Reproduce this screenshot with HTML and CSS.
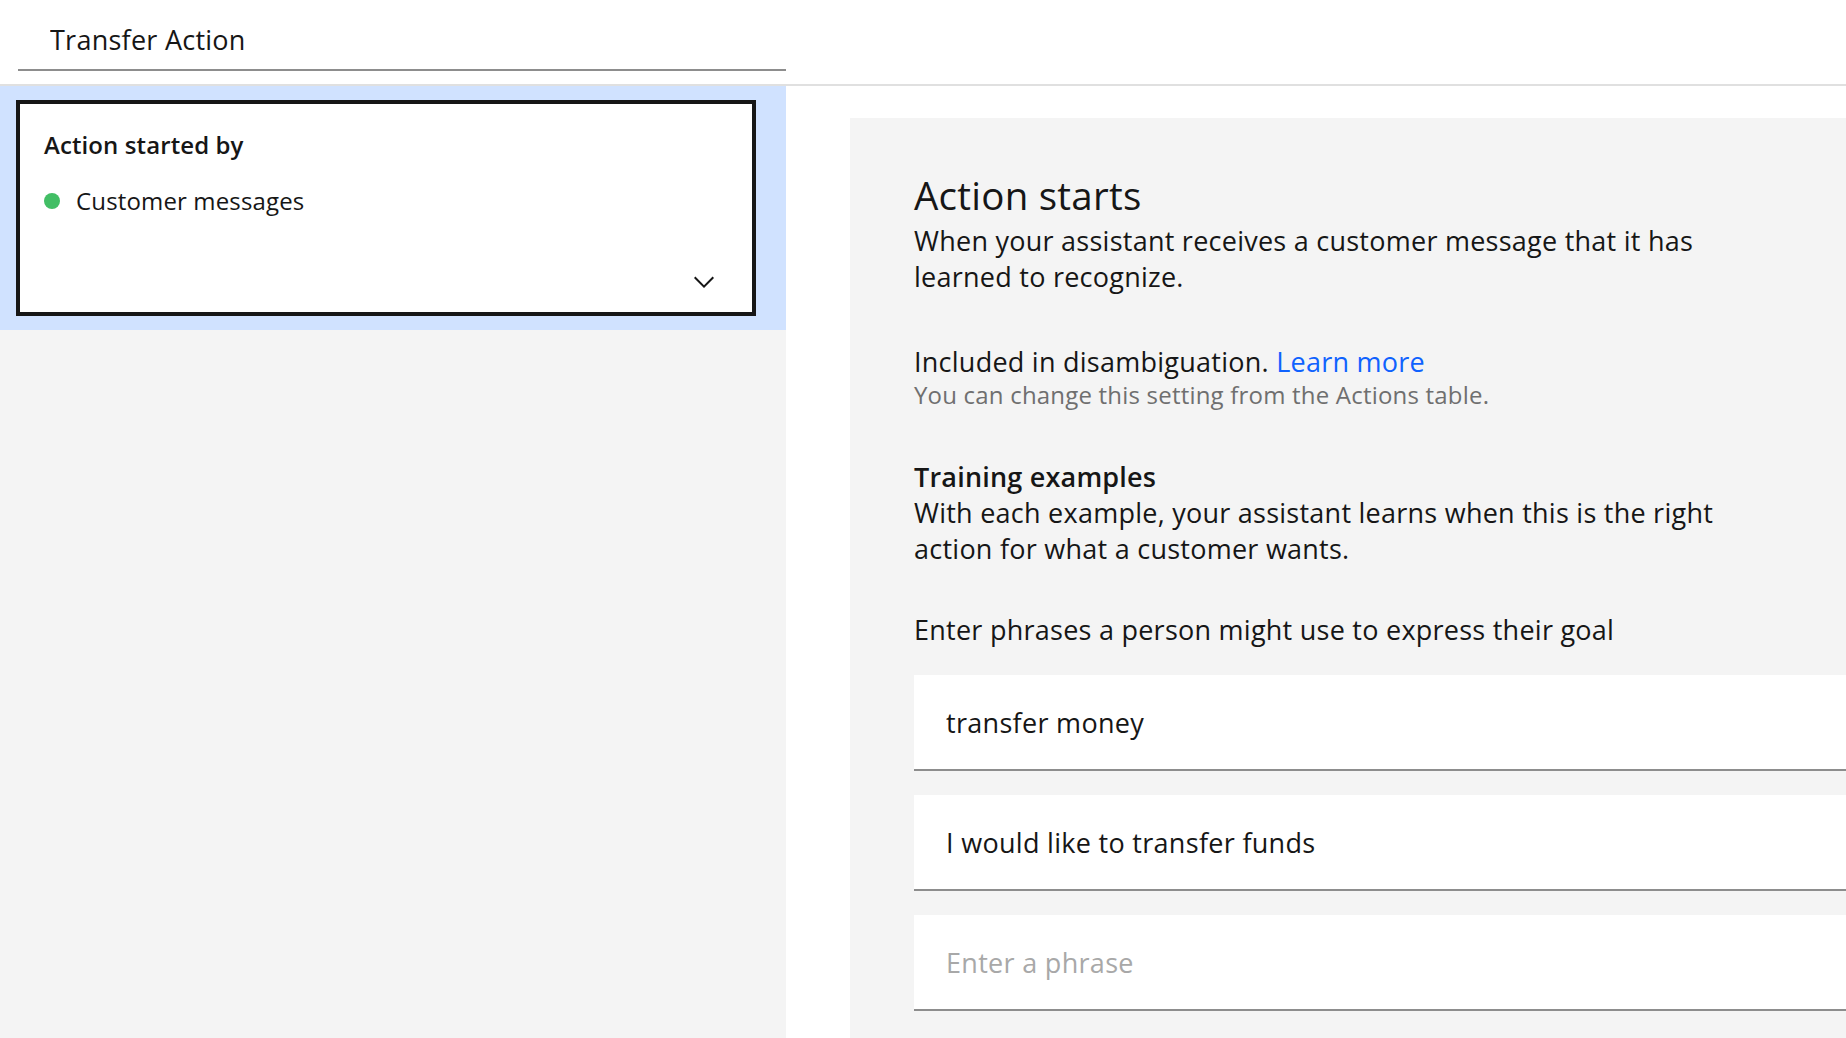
FILE: index.html
```html
<!DOCTYPE html>
<html lang="en">
<head>
<meta charset="utf-8">
<title>Transfer Action</title>
<link rel="stylesheet" href="styles.css">
</head>
<body>
<header class="topbar">
  <input class="title-input" type="text" value="Transfer Action" aria-label="Action name">
</header>
<main class="layout">
  <aside class="sidebar">
    <div class="step-selected">
      <div class="step-card">
        <h3 class="step-title">Action started by</h3>
        <div class="step-status"><span class="dot"></span>Customer messages</div>
        <svg class="chevron" viewBox="0 0 16 16" aria-hidden="true"><path d="M8 11L3 6l.7-.7L8 9.6l4.3-4.3.7.7z"/></svg>
      </div>
    </div>
  </aside>
  <section class="editor">
    <h2 class="editor-title">Action starts</h2>
    <p class="text">When your assistant receives a customer message that it has learned to recognize.</p>
    <p class="text disambig">Included in disambiguation. <a class="link" href="#">Learn more</a></p>
    <p class="helper">You can change this setting from the Actions table.</p>
    <h3 class="section-title">Training examples</h3>
    <p class="text">With each example, your assistant learns when this is the right action for what a customer wants.</p>
    <p class="text prompt">Enter phrases a person might use to express their goal</p>
    <div class="examples">
      <input class="example" type="text" value="transfer money" aria-label="Example 1">
      <input class="example" type="text" value="I would like to transfer funds" aria-label="Example 2">
      <input class="example" type="text" placeholder="Enter a phrase" aria-label="New example">
    </div>
  </section>
</main>
</body>
</html>
```

FILE: styles.css
```css
* { box-sizing: border-box; }

html, body {
  margin: 0;
  height: 100%;
  overflow: hidden;
}

body {
  background: #ffffff;
  color: #161616;
  font-family: "Open Sans", "Noto Sans", "Liberation Sans", sans-serif;
}

.topbar {
  height: 86px;
  border-bottom: 2px solid #e0e0e0;
  padding-top: 13px;
}

.title-input {
  display: block;
  margin-left: 18px;
  width: 768px;
  height: 58px;
  padding: 0 32px 3px;
  border: none;
  border-bottom: 2px solid #8d8d8d;
  background: transparent;
  font: 400 27px "Open Sans", "Noto Sans", sans-serif;
  letter-spacing: 0.25px;
  color: #161616;
  outline: none;
}

.layout {
  display: flex;
  height: calc(100% - 86px);
}

.sidebar {
  width: 786px;
  flex-shrink: 0;
  background: #f4f4f4;
}

.step-selected {
  background: #d0e2ff;
  padding: 14px 30px 14px 16px;
}

.step-card {
  display: flex;
  flex-direction: column;
  height: 216px;
  background: #ffffff;
  border: 4px solid #161616;
  padding: 25px 32px 14px 24px;
}

.step-title {
  margin: 0;
  font-size: 24px;
  line-height: 32px;
  font-weight: 600;
  letter-spacing: 0.1px;
}

.step-status {
  display: flex;
  align-items: center;
  gap: 16px;
  margin-top: 24px;
  font-size: 24px;
  line-height: 32px;
  letter-spacing: 0.15px;
}

.dot {
  width: 16px;
  height: 16px;
  border-radius: 50%;
  background: #42be65;
  flex-shrink: 0;
}

.chevron {
  width: 32px;
  height: 32px;
  margin-top: auto;
  align-self: flex-end;
  fill: #161616;
}

.editor {
  flex: 1;
  min-width: 0;
  margin: 32px 0 0 64px;
  padding: 52.5px 0 0 64px;
  background: #f4f4f4;
}

.editor-title {
  margin: 0 0 4px;
  font-size: 38.5px;
  line-height: 48px;
  font-weight: 400;
  letter-spacing: 0.25px;
}

.text {
  margin: 0;
  max-width: 860px;
  font-size: 27px;
  line-height: 36px;
  letter-spacing: 0.25px;
}

.disambig {
  margin-top: 49px;
}

.link {
  color: #0f62fe;
  text-decoration: none;
}

.helper {
  margin: 0;
  font-size: 24px;
  line-height: 30px;
  letter-spacing: 0.2px;
  color: #6f6f6f;
}

.section-title {
  margin: 49px 0 0;
  font-size: 27px;
  line-height: 36px;
  font-weight: 600;
  letter-spacing: 0.2px;
}

.prompt {
  margin-top: 45px;
}

.examples {
  display: flex;
  flex-direction: column;
  gap: 24px;
  margin-top: 27.5px;
}

.example {
  display: block;
  width: 100%;
  height: 96px;
  padding: 1px 32px 0;
  border: none;
  border-bottom: 2px solid #8d8d8d;
  background: #ffffff;
  font: 400 27px "Open Sans", "Noto Sans", sans-serif;
  letter-spacing: 0.3px;
  color: #161616;
  outline: none;
}

.example::placeholder {
  color: #a8a8a8;
}
```
